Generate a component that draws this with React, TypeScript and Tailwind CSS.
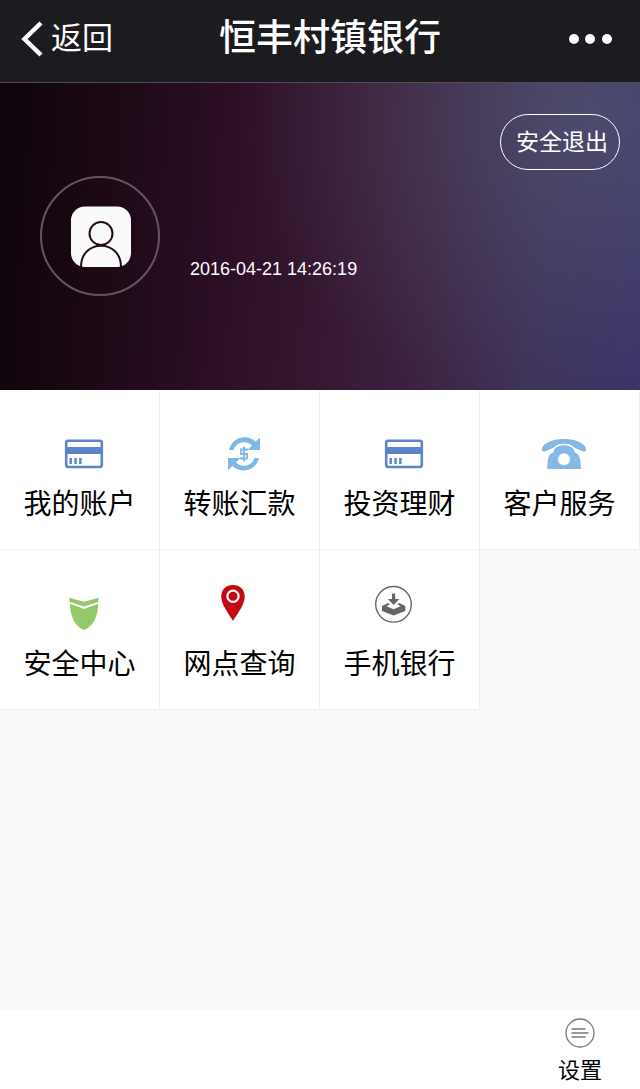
import React from 'react';

const CardIcon = () => (
  <svg className="h-15 w-14" viewBox="0 -10 56 60" aria-hidden="true">
    <rect x="14.200" y="10.700" width="35.600" height="26.300" rx="2" fill="none" stroke="#5b85cd" strokeWidth="2.600" />
    <path d="M13 17h38v7H13zM17.500 28h2.500v6h-2.500zM22.300 28h2.500v6h-2.500zM27.100 28h2.500v6h-2.500z" fill="#5b85cd" />
  </svg>
);

const TransferIcon = () => (
  <svg className="h-15 w-14" viewBox="0 -10 56 60" aria-hidden="true">
    <g fill="#7fb8e6">
      <path d="M17 20C20 7 35 3.500 43.500 11.500L48 7.700V20H35.500L40 15.500C34 9.500 24 12 21.500 20z" />
      <path d="M47 28C44 41 29 44 20.500 36L16 40V28H28.500L24 32.500C30 38.500 40 36 42.500 28z" />
    </g>
    {/* dollar mark */}
    <path d="M36 19.500H29V24H35V28.500H28M32 16.500V31.500" fill="none" stroke="#7fb8e6" strokeWidth="1.800" />
  </svg>
);

const PhoneIcon = () => (
  <svg className="h-15 w-14" viewBox="0 -10 56 60" aria-hidden="true">
    <path
      d="M10 20C9 15 18 9 32 9S55 15 54 20C53.500 22.500 50 22.500 46.500 20.500L42 18C41 15.500 37 14.500 32 14.500S23 15.500 22 18L17.500 20.500C14 22.500 10.500 22.500 10 20z"
      fill="#85bae7"
    />
    <path
      d="M22 19C24 16 27 14.500 32 14.500S40 16 42 19C42 22 43 23 45 23.500C47.500 25 49 30 49 39H15.300C15.300 30 16.500 25 19 23.500C21 23 22 22 22 19z"
      fill="#85bae7"
    />
    <path d="M12.500 22.500L22 18.500C24.500 15.500 27 14.500 32 14.500S39.500 15.500 42 18.500L51.500 22.500" fill="none" stroke="#fff" strokeWidth="1.400" />
    <circle cx="32" cy="29.300" r="6" fill="#fff" />
  </svg>
);

const ShieldIcon = () => (
  <svg className="h-15 w-14" viewBox="0 -10 56 60" aria-hidden="true">
    <path d="M17.300 7.700L32 11.800L46.700 7.700L46.200 12L32 16.500L17.800 12z" fill="#93c96a" />
    <path d="M18 13.800L32 19L46.200 13.800C46.200 26 41 37 32 40C23 37 18 26 18 13.800z" fill="#93c96a" />
  </svg>
);

const PinIcon = () => (
  <svg className="h-15 w-14" viewBox="0 -10 56 60" aria-hidden="true">
    <path d="M21 31C17 24 9.300 15 9.300 6.500C9.300-.5 14-5 21-5S32.700-.5 32.700 6.500C32.700 15 25 24 21 31z" fill="#c30813" />
    <circle cx="21" cy="6.200" r="5.600" fill="none" stroke="#fff" strokeWidth="2.200" />
  </svg>
);

const DownloadIcon = () => (
  <svg className="h-15 w-14" viewBox="0 -10 56 60" aria-hidden="true">
    <circle cx="21.500" cy="14.300" r="17.800" fill="none" stroke="#666" strokeWidth="1.400" />
    <path d="M20 3.500h3.200V9h4.200L21.600 15L15.800 9H20z" fill="#666" />
    <path d="M10 16L16 13L18 14L14.500 16.200L21.600 19.300L28.700 16.200L25.200 14L27.200 13L33.300 16V21L21.600 25.600L10 21z" fill="#666" />
  </svg>
);

const menuItems = [
  { label: '我的账户', icon: CardIcon },
  { label: '转账汇款', icon: TransferIcon },
  { label: '投资理财', icon: CardIcon },
  { label: '客户服务', icon: PhoneIcon },
  { label: '安全中心', icon: ShieldIcon },
  { label: '网点查询', icon: PinIcon },
  { label: '手机银行', icon: DownloadIcon }
];

const App: React.FC = () => {
  return (
    <div className="flex min-h-screen flex-col bg-[#f9f9f9] font-['Liberation_Sans','Noto_Sans_CJK_SC',sans-serif] text-black">
      {/* Title bar */}
      <header className="grid grid-cols-[1fr_auto_1fr] items-center border-b border-[#544a58] bg-[#1c1b1f] pt-[14px] pb-[18px] pl-5 text-white">
        <button className="flex items-center gap-[7px] justify-self-start text-[31px] leading-[50px]">
          <svg className="h-9 w-6" viewBox="0 0 24 36" fill="none" stroke="currentColor" strokeWidth="4.500" aria-hidden="true">
            <path d="M21 2L4.500 18L21 34" />
          </svg>
          返回
        </button>
        <h1 className="text-[37px] leading-[50px] font-medium">恒丰村镇银行</h1>
        <button className="justify-self-end pr-7" aria-label="更多">
          <svg className="h-3 w-11" viewBox="0 0 44 12" fill="currentColor" aria-hidden="true">
            <circle cx="6" cy="6" r="5" />
            <circle cx="22" cy="6" r="5" />
            <circle cx="39" cy="6" r="5" />
          </svg>
        </button>
      </header>

      {/* Account banner */}
      <section className="flex h-[307px] flex-col bg-[radial-gradient(ellipse_55%_100%_at_92%_10%,#5a607a88,transparent),linear-gradient(94deg,#0e040a_0%,#1c0915_17%,#2b0e24_34%,#361630_50%,#3c2342_67%,#3d3158_83%,#3a3268_100%)] px-5 pt-[31px] text-white">
        <button className="h-14 w-30 self-end rounded-full border border-white pl-1 text-[23px]">安全退出</button>
        <div className="mt-[6px] flex items-center pl-5">
          <div className="flex size-30 items-center justify-center rounded-full border-2 border-[#665460]">
            <svg className="size-16" viewBox="0 0 64 64" fill="none" aria-hidden="true">
              <rect x="3" y="2.500" width="60" height="60.500" rx="14" fill="#fafafa" />
              <circle cx="33" cy="29.500" r="11.500" stroke="#210b1a" strokeWidth="2" />
              <path d="M13 63C13 34.500 53 34.500 53 63" stroke="#210b1a" strokeWidth="2" />
            </svg>
          </div>
          <time className="mt-[66px] ml-[30px] text-lg">2016-04-21 14:26:19</time>
        </div>
      </section>

      {/* Services */}
      <nav className="grid grid-cols-4">
        {menuItems.map(({ label, icon: Icon }) => (
          <a
            key={label}
            href="#"
            className="flex h-40 flex-col items-center border-r border-b border-[#f0f0f0] bg-white pt-[30px] text-[28px] leading-[50px]"
          >
            <Icon />
            {label}
          </a>
        ))}
      </nav>

      <footer className="mt-auto flex h-[79px] justify-end bg-white">
        <button className="flex w-30 flex-col items-center pt-2 text-[22px] leading-[46px]">
          <svg className="size-[30px] shrink-0" viewBox="0 0 30 30" fill="none" stroke="#777" aria-hidden="true">
            <circle cx="15" cy="15" r="14" strokeWidth="1.300" />
            <path d="M6.500 11H20.500M6.500 15H23.500M6.500 19H20.500" strokeWidth="1.500" />
          </svg>
          设置
        </button>
      </footer>
    </div>
  );
};

export default App;
